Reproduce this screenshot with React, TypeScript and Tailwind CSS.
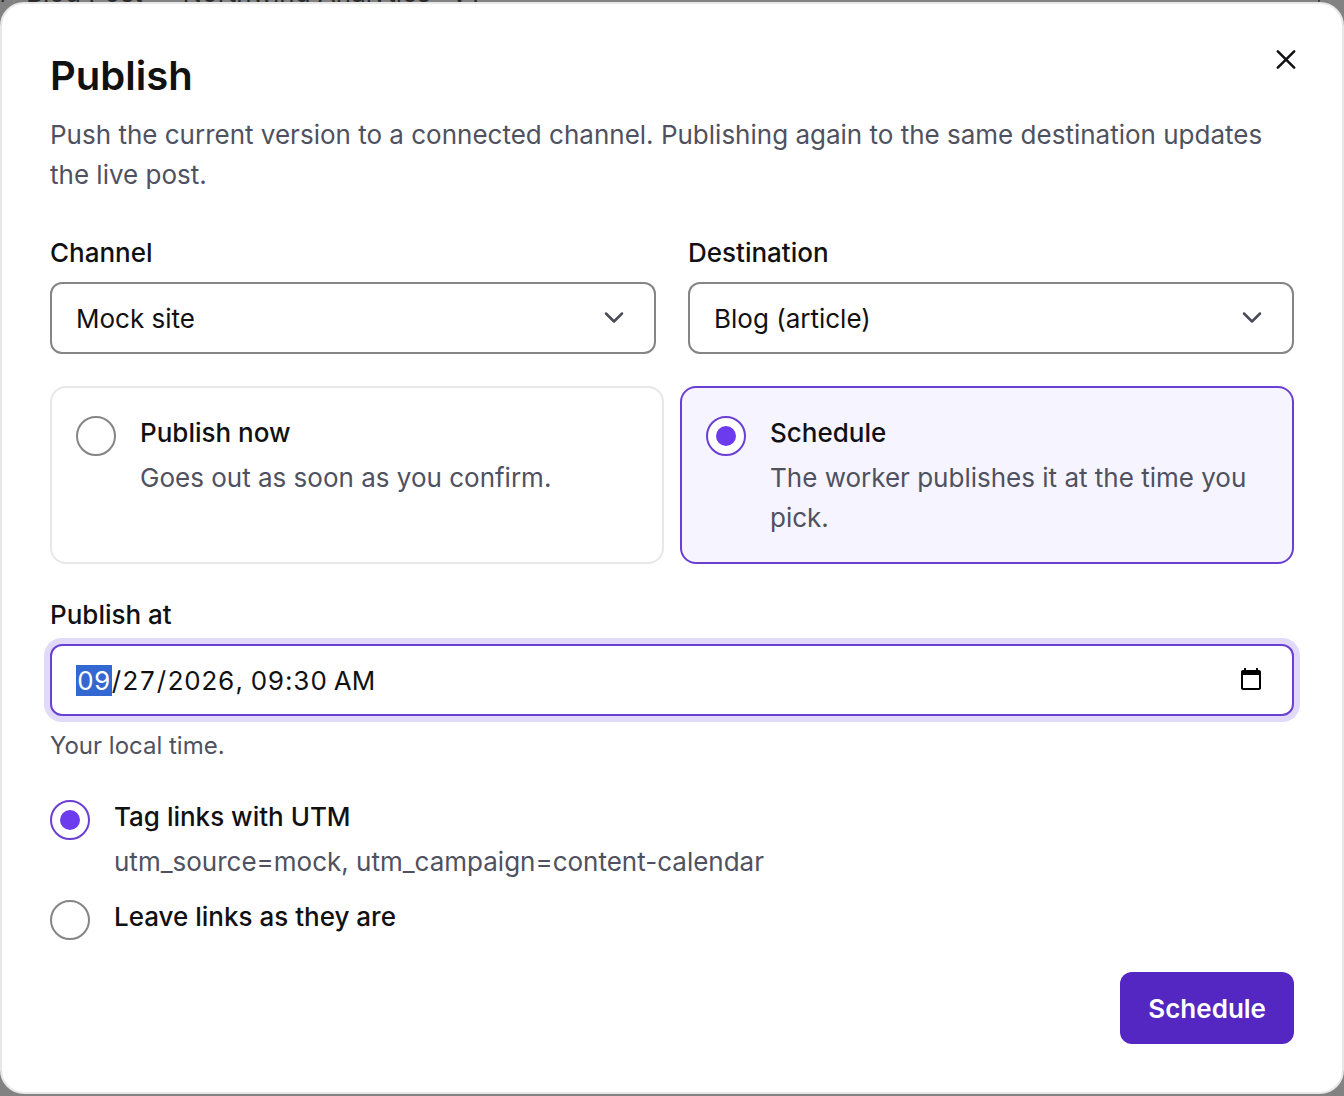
import { useState } from "react";
import type { ReactNode } from "react";

function SelectField({ id, label, options }: { id: string; label: string; options: string[] }) {
  return (
    <div className="flex min-w-0 flex-col gap-[9px]">
      <label htmlFor={id} className="font-medium leading-10">
        {label}
      </label>
      <div className="relative">
        <select
          id={id}
          className="h-18 w-full appearance-none rounded-xl border-2 border-[#858585] bg-white pr-20 pl-6 outline-none"
        >
          {options.map((option) => (
            <option key={option}>{option}</option>
          ))}
        </select>
        <svg
          className="pointer-events-none absolute top-5 right-[26px] size-8 text-[#4a4a58]"
          viewBox="0 0 32 32"
          fill="none"
          stroke="currentColor"
          strokeWidth="2.5"
          strokeLinecap="round"
          strokeLinejoin="round"
          aria-hidden="true"
        >
          <path d="M8 11.5 16 19.5l8-8" />
        </svg>
      </div>
    </div>
  );
}

type RadioProps = {
  name: string;
  title: string;
  checked: boolean;
  onChange: () => void;
  className: string;
  children?: ReactNode;
};

function RadioOption({ name, title, checked, onChange, className, children }: RadioProps) {
  return (
    <label className={className}>
      <input
        type="radio"
        name={name}
        checked={checked}
        onChange={onChange}
        className="mt-1 grid size-10 shrink-0 appearance-none place-items-center rounded-full border-2 border-[#858585] bg-white before:size-5 before:rounded-full checked:border-[#6b3fd4] checked:before:bg-[#6d3bef]"
      />
      <span className="flex min-w-0 flex-col gap-1">
        <span className="font-medium leading-[42px]">{title}</span>
        {children}
      </span>
    </label>
  );
}

const card = "flex gap-6 rounded-2xl border-2 p-6";

export default function App() {
  const [when, setWhen] = useState("schedule");
  const [links, setLinks] = useState("tag");

  return (
    <div
      className="flex min-h-screen flex-col bg-[#828282] text-[26px] text-[#111113]"
      style={{ fontFamily: 'Inter, "Liberation Sans", sans-serif' }}
    >
      <div className="flex h-0.5 items-end overflow-hidden whitespace-nowrap leading-[18px] text-[#2a2a2a]">
        <span className="w-[26px] shrink-0">/</span>
        <span className="mr-10">Blog Post</span>
        <span className="mr-5">Northwind Analytics</span>
        <span>V1</span>
        <span className="mr-6 ml-auto h-0.5 w-0.5 bg-[#444444]" />
      </div>
      <main
        role="dialog"
        aria-labelledby="dialog-title"
        className="relative rounded-3xl border-2 border-[#e7e7e7] bg-white p-12"
      >
        <button type="button" aria-label="Close" className="absolute top-10 right-10 p-0">
          <svg
            className="size-8"
            viewBox="0 0 32 32"
            fill="none"
            stroke="currentColor"
            strokeWidth="2.5"
            strokeLinecap="round"
            aria-hidden="true"
          >
            <path d="M7.8 7.3 24.2 23.7M24.2 7.3 7.8 23.7" />
          </svg>
        </button>

        <h1 id="dialog-title" className="text-[40px] leading-12 font-semibold">
          Publish
        </h1>
        <p className="mt-[15px] leading-10 text-[#4f5160]">
          Push the current version to a connected channel. Publishing again to the same destination updates the live
          post.
        </p>

        <form className="mt-[38px] flex flex-col" onSubmit={(event) => event.preventDefault()}>
          <div className="grid grid-cols-2 gap-8">
            <SelectField id="channel" label="Channel" options={["Mock site"]} />
            <SelectField id="destination" label="Destination" options={["Blog (article)"]} />
          </div>

          <div role="radiogroup" aria-label="When to publish" className="mt-8 grid grid-cols-2 gap-4">
            <RadioOption
              name="when"
              title="Publish now"
              checked={when === "now"}
              onChange={() => setWhen("now")}
              className={when === "now" ? `${card} border-[#6b3fd4] bg-[#f6f4fe]` : `${card} border-[#e7e7e7]`}
            >
              <span className="leading-10 text-[#4f5160]">Goes out as soon as you confirm.</span>
            </RadioOption>
            <RadioOption
              name="when"
              title="Schedule"
              checked={when === "schedule"}
              onChange={() => setWhen("schedule")}
              className={when === "schedule" ? `${card} border-[#6b3fd4] bg-[#f6f4fe]` : `${card} border-[#e7e7e7]`}
            >
              <span className="leading-10 text-[#4f5160]">The worker publishes it at the time you pick.</span>
            </RadioOption>
          </div>

          <div className="mt-[31px] flex flex-col gap-[9px]">
            <label htmlFor="publish-at" className="font-medium leading-10">
              Publish at
            </label>
            <input
              id="publish-at"
              type="datetime-local"
              defaultValue="2026-09-27T09:30"
              autoFocus
              className="h-18 w-full rounded-xl border-2 border-[#6b3fd4] bg-white pr-[26px] pl-6 tabular-nums ring-6 ring-[#e2dafb] outline-none"
            />
          </div>
          <p className="mt-3 text-2xl leading-9 text-[#4f5160]">Your local time.</p>

          <div role="radiogroup" aria-label="Link tagging" className="mt-8 flex flex-col gap-3.5">
            <RadioOption
              name="links"
              title="Tag links with UTM"
              checked={links === "tag"}
              onChange={() => setLinks("tag")}
              className="flex gap-6"
            >
              <span className="leading-10 text-[#4f5160]">utm_source=mock, utm_campaign=content-calendar</span>
            </RadioOption>
            <RadioOption
              name="links"
              title="Leave links as they are"
              checked={links === "leave"}
              onChange={() => setLinks("leave")}
              className="flex gap-6"
            />
          </div>

          <button
            type="submit"
            className="mt-8 h-18 self-end rounded-xl bg-[#5426c2] px-7 font-semibold text-white"
          >
            Schedule
          </button>
        </form>
      </main>
    </div>
  );
}
